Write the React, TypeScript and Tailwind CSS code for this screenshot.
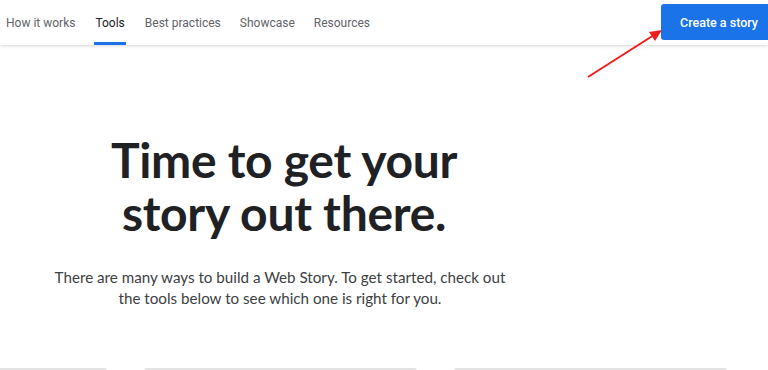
import { useState } from "react";

const navItems = ["How it works", "Tools", "Best practices", "Showcase", "Resources"];

export default function App() {
  const [active] = useState("Tools");

  return (
    <div className="relative h-[370px] w-[768px] overflow-hidden bg-white font-['Lato','Open_Sans',sans-serif]">
      <header className="flex h-[45px] items-stretch justify-between bg-white shadow-[0_1px_3px_rgba(60,64,67,0.22)]">
        <nav className="flex items-stretch gap-[19px] pl-[6px] font-['Roboto',sans-serif]">
          {navItems.map((item) => (
            <a
              key={item}
              className={
                item === active
                  ? "relative flex items-center border-b-[3px] border-[#1a73e8] px-[1px] pt-[4px] text-[12px] text-[#202124]"
                  : "relative flex items-center border-b-[3px] border-transparent pt-[4px] text-[12px] text-[#5f6368]"
              }
            >
              {item}
            </a>
          ))}
        </nav>
        <div className="flex items-start pt-[4px]">
          <button className="h-[36px] w-[107px] rounded-l-[3px] bg-[#1a73e8] pl-[19px] pt-[2px] text-left font-['Roboto',sans-serif] text-[12.5px] font-medium text-white">
            Create a story
          </button>
        </div>
      </header>

      <main className="flex flex-col">
        <section className="flex w-[568px] flex-col items-center pt-[88px]">
          <h1 className="text-center text-[48px] font-bold leading-[53px] tracking-[-0.3px] text-[#202124]">
            Time to get your
            <br />
            story out there.
          </h1>
          <p className="mt-[28px] -translate-x-[4px] text-center text-[15.2px] leading-[21px] text-[#3c4043]">
            There are many ways to build a Web Story. To get started, check out
            <br />
            the tools below to see which one is right for you.
          </p>
        </section>

        <div className="-ml-[166px] mt-[59px] flex gap-[37px]">
          {[0, 1, 2].map((i) => (
            <div
              key={i}
              className="h-[40px] w-[273px] shrink-0 rounded-t-[3px] border-t-2 border-[#e3e3e3] bg-white"
            />
          ))}
        </div>
      </main>

      {/* annotation arrow */}
      <svg
        className="absolute left-0 top-0"
        width="768"
        height="370"
        viewBox="0 0 768 370"
      >
        <line x1="588" y1="77" x2="654" y2="35" stroke="#ef1c1c" strokeWidth="2" />
        <polygon points="662,30 649,32 655,41" fill="#ef1c1c" />
      </svg>
    </div>
  );
}
